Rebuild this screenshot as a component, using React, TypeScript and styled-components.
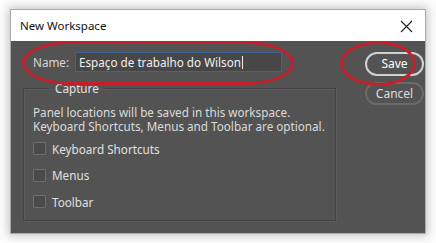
import React from "react";
import styled, { createGlobalStyle } from "styled-components";

const Global = createGlobalStyle`
  html, body { margin: 0; padding: 0; background: #ffffff; }
  body { font-family: "Noto Sans", "Open Sans", sans-serif; }
`;

const Page = styled.div`
  width: 436px;
  height: 243px;
  padding: 9px 0 0 10px;
  box-sizing: border-box;
  background: #fdfdfd;
`;

const Dialog = styled.div`
  position: relative;
  width: 416px;
  height: 225px;
  box-sizing: border-box;
  border: 1px solid #a9a9a9;
  box-shadow: 0 0 9px 2px rgba(0, 0, 0, 0.22);
  display: flex;
  flex-direction: column;
  background: #535353;
`;

const TitleBar = styled.div`
  height: 31px;
  flex: none;
  background: #ffffff;
  display: flex;
  align-items: center;
  justify-content: space-between;
  padding: 0 12px 0 9px;
  font-size: 11.5px;
  color: #111;
`;

const CloseBtn = styled.span`
  display: flex;
  align-items: center;
  margin-top: 1px;
`;

const Body = styled.div`
  flex: 1;
  display: flex;
  padding: 11px 0 0 12px;
  color: #e6e6e6;
  font-size: 11.7px;
`;

const LeftCol = styled.div`
  width: 313px;
  display: flex;
  flex-direction: column;
`;

const NameRow = styled.div`
  display: flex;
  align-items: center;
  padding-left: 10px;
  height: 20px;
`;

const Label = styled.span`
  color: #d8d8d8;
  width: 42px;
`;

const Input = styled.div`
  width: 207px;
  height: 20px;
  box-sizing: border-box;
  border: 1px solid #3c6596;
  background: #474747;
  display: flex;
  align-items: center;
  padding-left: 3px;
  color: #f0f0f0;
`;

const Caret = styled.span`
  display: inline-block;
  width: 1px;
  height: 13px;
  background: #f0f0f0;
  margin-left: 1px;
`;

const Group = styled.fieldset`
  margin: 10px 0 0 0;
  padding: 0 0 0 9px;
  height: 139px;
  min-width: 0;
  border: 1px solid #444444;
  box-shadow: inset 1px 1px 0 #5c5c5c, 1px 1px 0 #5c5c5c;
  box-sizing: border-box;
`;

const Legend = styled.legend`
  margin-left: 16px;
  padding: 0 6px;
  color: #e2e2e2;
  font-size: 11.7px;
  line-height: 12px;
`;

const Info = styled.div`
  margin-top: 12px;
  display: flex;
  flex-direction: column;
  color: #dcdcdc;
`;

const InfoLine = styled.div`
  height: 13.5px;
  line-height: 13.5px;
  white-space: nowrap;
`;

const CheckList = styled.div`
  display: flex;
  flex-direction: column;
  gap: 13.5px;
  margin-top: 9px;
`;

const CheckRow = styled.label`
  display: flex;
  align-items: center;
  gap: 6px;
  height: 13px;
  color: #e0e0e0;
`;

const Box = styled.span`
  width: 11px;
  height: 11px;
  border: 1px solid #6e6e6e;
  background: #4a4a4a;
  border-radius: 1px;
  flex: none;
`;

const RightCol = styled.div`
  display: flex;
  flex-direction: column;
  gap: 6px;
  padding-left: 29px;
`;

const Button = styled.button<{ $primary?: boolean }>`
  width: 59px;
  height: ${(p) => (p.$primary ? 24 : 23)}px;
  border-radius: 12px;
  border: ${(p) => (p.$primary ? "2px solid #d2d2d2" : "2px solid #6a6a6a")};
  background: #535353;
  color: ${(p) => (p.$primary ? "#ffffff" : "#dedede")};
  font-family: "Noto Sans", sans-serif;
  font-size: 12px;
  padding: 0;
  line-height: 1;
`;

const Ring = styled.div<{ $l: number; $t: number; $w: number; $h: number; $r: string }>`
  position: absolute;
  left: ${(p) => p.$l}px;
  top: ${(p) => p.$t}px;
  width: ${(p) => p.$w}px;
  height: ${(p) => p.$h}px;
  box-sizing: border-box;
  border: 3px solid #c41f2b;
  border-radius: ${(p) => p.$r};
  pointer-events: none;
`;

export default function App() {
  return (
    <>
      <Global />
      <Page>
        <Dialog>
          <TitleBar>
            <span>New Workspace</span>
            <CloseBtn>
              <svg width="13" height="13" viewBox="0 0 13 13">
                <path d="M1 1 L12 12 M12 1 L1 12" stroke="#222" strokeWidth="1.1" />
              </svg>
            </CloseBtn>
          </TitleBar>
          <Body>
            <LeftCol>
              <NameRow>
                <Label>Name:</Label>
                <Input>
                  Espaço de trabalho do Wilson
                  <Caret />
                </Input>
              </NameRow>
              <Group>
                <Legend>Capture</Legend>
                <Info>
                  <InfoLine>Panel locations will be saved in this workspace.</InfoLine>
                  <InfoLine>Keyboard Shortcuts, Menus and Toolbar are optional.</InfoLine>
                </Info>
                <CheckList>
                  <CheckRow>
                    <Box />
                    Keyboard Shortcuts
                  </CheckRow>
                  <CheckRow>
                    <Box />
                    Menus
                  </CheckRow>
                  <CheckRow>
                    <Box />
                    Toolbar
                  </CheckRow>
                </CheckList>
              </Group>
            </LeftCol>
            <RightCol>
              <Button $primary>Save</Button>
              <Button>Cancel</Button>
            </RightCol>
          </Body>
          <Ring $l={11} $t={31} $w={272} $h={44} $r="48px / 22px" />
          <Ring $l={329} $t={31} $w={76} $h={45} $r="50%" />
        </Dialog>
      </Page>
    </>
  );
}
